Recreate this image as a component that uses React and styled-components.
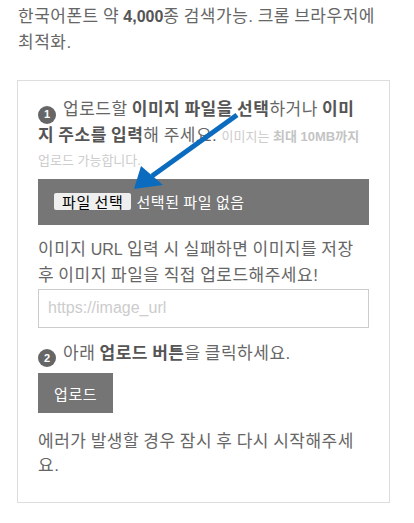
import React from 'react';
import styled, { createGlobalStyle } from 'styled-components';

const GlobalStyle = createGlobalStyle`
  body {
    margin: 0;
    background: #fff;
    font-family: "Liberation Sans", "Noto Sans CJK KR", sans-serif;
    color: #666;
  }
`;

// hangul in Noto runs narrower than the reference face, so widen it a little
const Text = styled.p`
  margin: 0;
  padding-right: ${(p) => p.$inset || 0}px;
  font-size: 17px;
  line-height: ${(p) => p.$lh || 24}px;
  letter-spacing: 0.5px;
  word-spacing: -1px;
  color: #666;
  b {
    color: #555;
  }
`;

const Num = styled.span`
  font-size: ${(p) => p.$size || 16}px;
  line-height: 1;
  letter-spacing: 0;
`;

const Page = styled.div`
  padding: 4px 0 0 18px;
  width: 372px;
`;

const Intro = styled(Text)`
  margin: 0 0 24px;
`;

const Card = styled.div`
  position: relative;
  margin-left: -1px;
  border: 1px solid #ddd;
  padding: 17px 20px 24px;
`;

const Badge = styled.span`
  display: inline-flex;
  align-items: center;
  justify-content: center;
  width: 18px;
  height: 18px;
  margin-right: 7px;
  border-radius: 50%;
  background: #666;
  color: #fff;
  font-family: "Liberation Sans", sans-serif;
  font-size: 11px;
  font-weight: bold;
  letter-spacing: 0;
  vertical-align: -3px;
  line-height: 1;
`;

const Note = styled.span`
  font-size: 13px;
  line-height: 1;
  letter-spacing: 0;
  word-spacing: 0;
  color: #ccc;
  && b {
    color: #c4c4c4;
  }
`;

const FileBar = styled.div`
  display: flex;
  align-items: center;
  gap: 5px;
  height: 46px;
  margin-top: 7px;
  padding-left: 16px;
  background: #767676;
  color: #fff;
  font-size: 15px;
  letter-spacing: 0.6px;
  word-spacing: -1px;
`;

const FileButton = styled.span`
  display: inline-flex;
  align-items: center;
  height: 17px;
  padding: 0 8px;
  border-radius: 2px;
  background: #efefef;
  color: #000;
`;

const Hint = styled(Text)`
  margin-top: 12px;
`;

const UrlInput = styled.input`
  display: block;
  box-sizing: border-box;
  width: 100%;
  height: 39px;
  margin: 0 0 14px;
  padding: 0 9px;
  border: 1px solid #ccc;
  font-family: "Liberation Sans", sans-serif;
  font-size: 16px;
  color: #555;
  outline: none;
  &::placeholder {
    color: #ccc;
  }
`;

const UploadButton = styled.button`
  display: block;
  height: 40px;
  margin-top: 6px;
  padding: 0 16px;
  border: none;
  background: #757575;
  color: #fff;
  font-family: "Liberation Sans", "Noto Sans CJK KR", sans-serif;
  font-size: 15px;
  letter-spacing: 0.6px;
`;

const ErrorText = styled(Text)`
  margin-top: 17px;
`;

const Arrow = styled.svg`
  position: absolute;
  left: 0;
  top: 0;
  pointer-events: none;
`;

export default function App() {
  return (
    <Page>
      <GlobalStyle />
      <Intro $lh={26}>
        한국어폰트 약 <b><Num>4,000</Num></b>종 검색가능. 크롬 브라우저에 최적화.
      </Intro>
      <Card>
        <Text $inset={3}>
          <Badge>1</Badge>업로드할 <b>이미지 파일을 선택</b>하거나 <b>이미지 주소를 입력</b>해 주세요.{' '}
          <Note>
            이미지는 <b>최대 <Num $size={13}>10MB</Num>까지</b> 업로드 가능합니다.
          </Note>
        </Text>
        <FileBar>
          <FileButton>파일 선택</FileButton>
          <span>선택된 파일 없음</span>
        </FileBar>
        <Hint $lh={26} $inset={8}>
          이미지 <Num>URL</Num> 입력 시 실패하면 이미지를 저장 후 이미지 파일을 직접 업로드해주세요!
        </Hint>
        <UrlInput placeholder="https://image_url" />
        <Text>
          <Badge>2</Badge>아래 <b>업로드 버튼</b>을 클릭하세요.
        </Text>
        <UploadButton>업로드</UploadButton>
        <ErrorText $inset={8}>에러가 발생할 경우 잠시 후 다시 시작해주세요.</ErrorText>
        <Arrow width="260" height="130" viewBox="0 0 260 130">
          <line x1="219" y1="34" x2="134" y2="95" stroke="#0b6cbf" strokeWidth="5" />
          <polygon points="116,108 123,85 145,104" fill="#0b6cbf" />
        </Arrow>
      </Card>
    </Page>
  );
}
